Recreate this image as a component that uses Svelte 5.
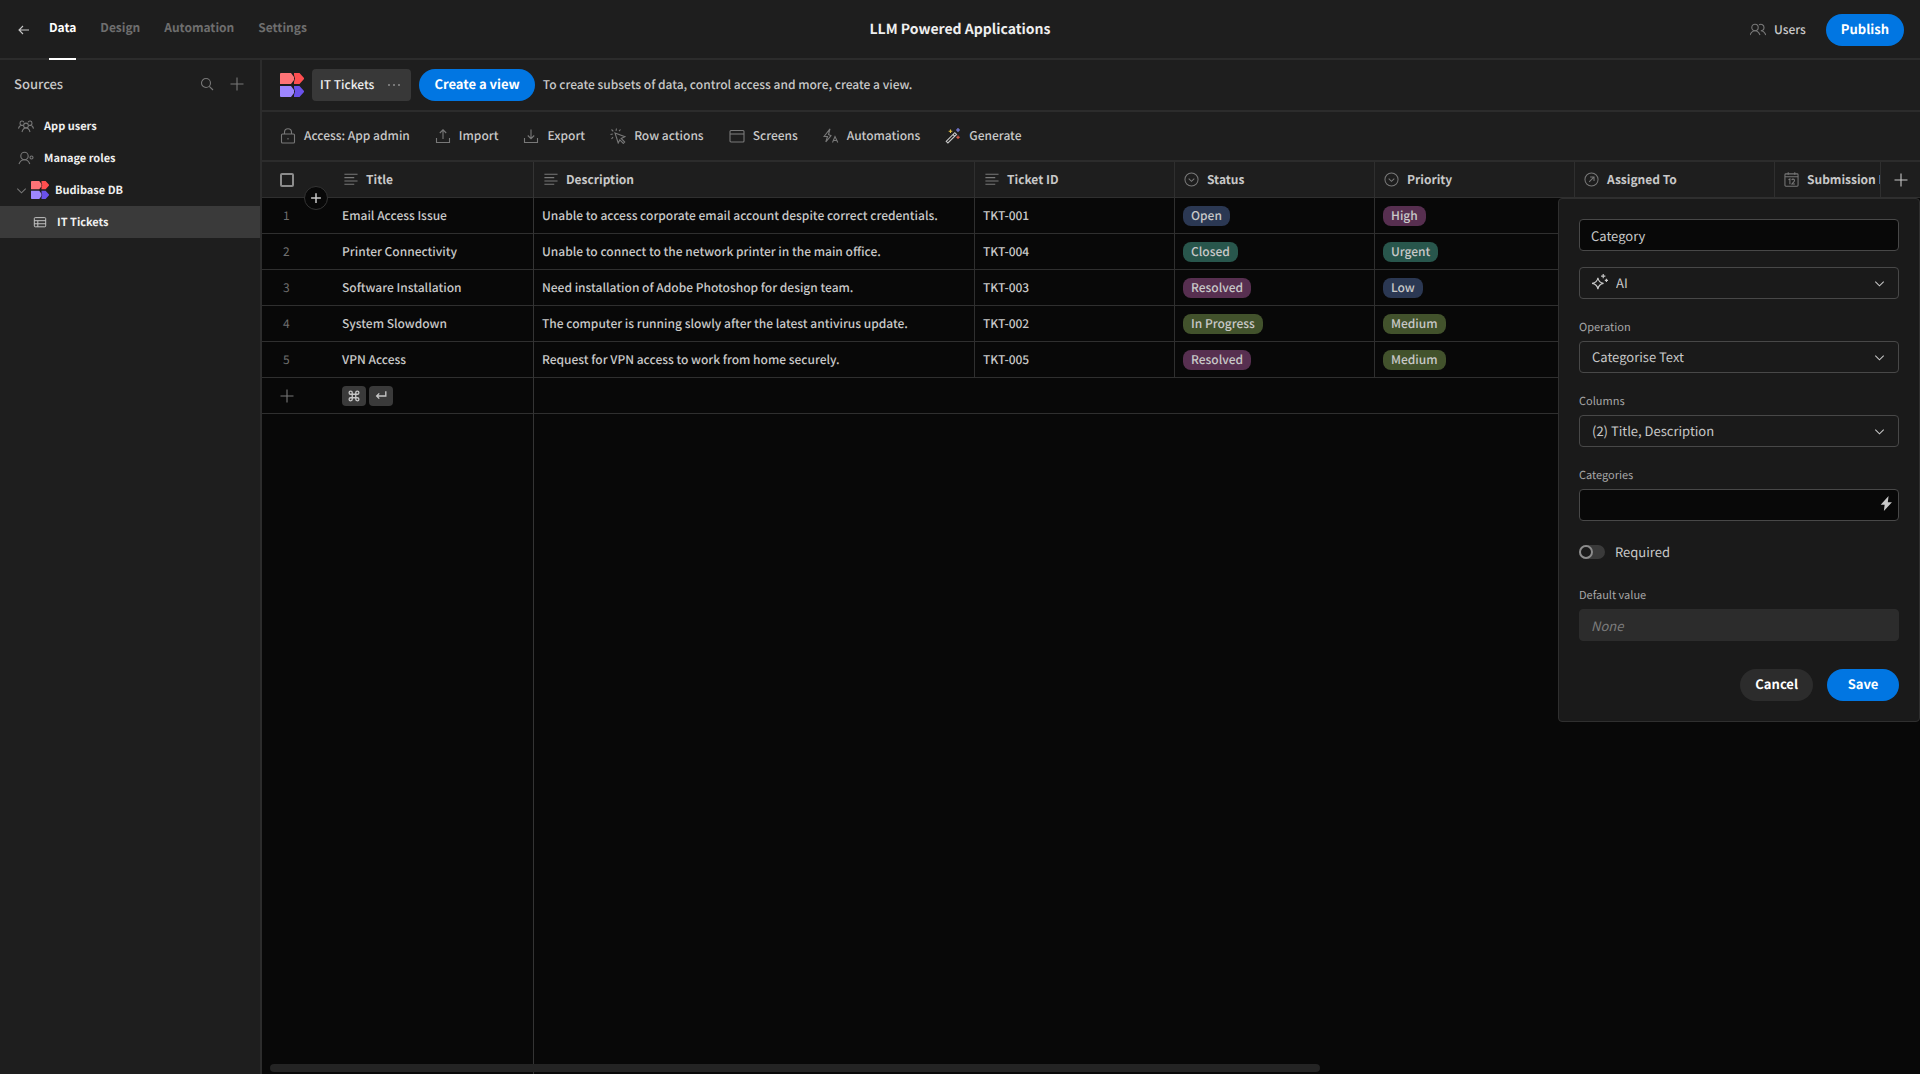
<script lang="ts">
  type Tag = { label: string; tone: string };
  type Ticket = {
    title: string;
    description: string;
    ticketId: string;
    status: Tag;
    priority: Tag;
  };

  const tabs = ['Data', 'Design', 'Automation', 'Settings'];
  let activeTab = $state('Data');

  const actions = [
    { label: 'Access: App admin', icon: 'lock' },
    { label: 'Import', icon: 'import' },
    { label: 'Export', icon: 'export' },
    { label: 'Row actions', icon: 'cursor' },
    { label: 'Screens', icon: 'screen' },
    { label: 'Automations', icon: 'automation' },
    { label: 'Generate', icon: 'wand' },
  ];

  const columns = [
    { label: 'Title', icon: 'text', cls: 'col-title' },
    { label: 'Description', icon: 'text', cls: 'col-wide' },
    { label: 'Ticket ID', icon: 'text', cls: 'col' },
    { label: 'Status', icon: 'options', cls: 'col' },
    { label: 'Priority', icon: 'options', cls: 'col' },
    { label: 'Assigned To', icon: 'link', cls: 'col' },
    { label: 'Submission Date', icon: 'date', cls: 'col' },
  ];

  const rows: Ticket[] = [
    {
      title: 'Email Access Issue',
      description: 'Unable to access corporate email account despite correct credentials.',
      ticketId: 'TKT-001',
      status: { label: 'Open', tone: 'blue' },
      priority: { label: 'High', tone: 'plum' },
    },
    {
      title: 'Printer Connectivity',
      description: 'Unable to connect to the network printer in the main office.',
      ticketId: 'TKT-004',
      status: { label: 'Closed', tone: 'teal' },
      priority: { label: 'Urgent', tone: 'teal' },
    },
    {
      title: 'Software Installation',
      description: 'Need installation of Adobe Photoshop for design team.',
      ticketId: 'TKT-003',
      status: { label: 'Resolved', tone: 'plum' },
      priority: { label: 'Low', tone: 'blue' },
    },
    {
      title: 'System Slowdown',
      description: 'The computer is running slowly after the latest antivirus update.',
      ticketId: 'TKT-002',
      status: { label: 'In Progress', tone: 'olive' },
      priority: { label: 'Medium', tone: 'olive' },
    },
    {
      title: 'VPN Access',
      description: 'Request for VPN access to work from home securely.',
      ticketId: 'TKT-005',
      status: { label: 'Resolved', tone: 'plum' },
      priority: { label: 'Medium', tone: 'olive' },
    },
  ];

  let columnName = $state('Category');
  let categories = $state('');
  let required = $state(false);
</script>

{#snippet logo()}
  <svg class="logo" viewBox="0 0 24 24" aria-hidden="true">
    <path fill="#ff7376" d="M0 1q0-1 1-1h10l3 4v3l-3 4H0z" />
    <path fill="#ff4e50" d="M14 0h5.500l4.500 5v1l-4.500 5H14l0-2 1-3.500-1-3.500z" />
    <path fill="#9d86ff" d="M0 13h11l3 4v3l-3 4H1q-1 0-1-1z" />
    <path fill="#6a51ea" d="M14 13h5.500l4.500 5v1l-4.500 5H14l0-2 1-3.500-1-3.500z" />
  </svg>
{/snippet}

{#snippet icon(name: string)}
  <svg class="icon" viewBox="0 0 16 16" aria-hidden="true">
    {#if name === 'back'}
      <path d="M7 4 3 8l4 4M3 8h10" />
    {:else if name === 'search'}
      <circle cx="7" cy="7" r="4.500" /><path d="m10.300 10.300 3.700 3.700" />
    {:else if name === 'plus'}
      <path d="M8 1.500v13M1.500 8h13" />
    {:else if name === 'users'}
      <circle cx="5" cy="5.500" r="3.200" />
      <path d="M0 13c1-2.500 2.600-4.300 5-4.300S9 10.500 10 13M9 2.800c2.600-1.400 5 .2 5 2.700 0 1.700-1.300 3.200-3.200 3.200 2.400 0 4 1.800 5 4.300" />
    {:else if name === 'group'}
      <circle cx="8" cy="7.500" r="2.400" />
      <path d="M4 14c.6-2.500 2-4 4-4s3.400 1.500 4 4M5 7.200C3.500 7.700 2 7 2 5.200 2 2.600 5.200 2.300 6 4.400M.5 10.500c.5-2 1.500-3 3.200-3.200M11 7.200c1.500.5 3-.2 3-2 0-2.600-3.200-2.900-4-.8M15.500 10.500c-.5-2-1.500-3-3.200-3.200" />
    {:else if name === 'role'}
      <circle cx="6.500" cy="6" r="3.700" />
      <path d="M1 14c.8-2.600 2.800-4.300 5.500-4.300 2.600 0 4.500 1.700 5.300 4.300" />
      <circle cx="13.500" cy="7.500" r="1.500" />
    {:else if name === 'chevron'}
      <path d="m3.500 6 4.500 4.500L12.500 6" />
    {:else if name === 'table'}
      <rect x="1.500" y="3" width="13" height="10.500" rx="1" /><path d="M1.500 6.500h13M1.500 10h13M5.500 6.500v7" />
    {:else if name === 'lock'}
      <rect x="1.500" y="6" width="13" height="9" rx="1" /><path d="M4.500 6V4.200c0-4.600 7-4.600 7 0V6M8 10v1.500" />
    {:else if name === 'import'}
      <path d="M1.500 10v4.500h13V10M8 11V2M4.800 5 8 1.800 11.200 5" />
    {:else if name === 'export'}
      <path d="M1.500 10v4.500h13V10M8 1.500v9M4.800 7.500 8 10.700l3.200-3.200" />
    {:else if name === 'cursor'}
      <path d="m5 5 10 3.700-3.800 1.800 3.500 3.500-1.400 1.400-3.500-3.500L8.200 15zM3.300 3.300 1.500 1.500M6 2.800 6.500.5M2.800 6 .5 6.500M9 3.200l1.500-1.700M3 9.200 1.500 11" />
    {:else if name === 'screen'}
      <rect x="1" y="2.500" width="14" height="11.500" rx="1" /><path d="M1 6h14" />
    {:else if name === 'automation'}
      <path d="M7 .8 1 8.500h3.500L2.800 14 8 7.700 5.500 6.500zM9.500 14.500l2.500-6 2.800 6M10.300 12.500h3.700" />
    {:else if name === 'wand'}
      <path class="wand" d="m1.200 13.300 8.600-8.600 1.700 1.700-8.600 8.600zM8 6.500l1.700 1.700" />
      <path class="spark-y" d="M5.500 1.500v3.500M3.700 3.200h3.600" />
      <path class="spark-b" d="M13 0v4M11 2h4" />
      <path class="spark-r" d="M13 7.500v3.500M11.300 9.300h3.500" />
    {:else if name === 'text'}
      <path d="M1.500 2.500h14M1.500 6h10.500M1.500 9.500h14M1.500 13h10.500" />
    {:else if name === 'options'}
      <circle cx="8" cy="8" r="7" /><path d="m5 7 3 3 3-3" />
    {:else if name === 'link'}
      <circle cx="8" cy="8" r="7" /><path d="m5.500 10.500 5-5M6.500 5.300h4.200v4.200" />
    {:else if name === 'date'}
      <rect x="1" y="2" width="14" height="13.200" rx="1" />
      <path d="M1 5h14M4.500.3v2.700M11.500.3v2.700M4.800 8.200l1.500-.8V13M8.300 8.700c.3-1.600 2.900-1.400 2.900.3 0 1.200-1.300 2-2.800 3.800h3.200" />
    {:else if name === 'ai'}
      <path d="M6.500 3.500c.5 3.300 2 4.800 5.300 5.300-3.300.5-4.800 2-5.300 5.500C6 10.800 4.500 9.300 1 8.800c3.500-.5 5-2 5.500-5.300zM11.500 0v4M9.500 2h4M14.500 4.500v3M13 6h3" />
    {:else if name === 'bolt'}
      <path class="solid" d="M10.200 0 1.800 9.300h4.200L5.200 16l8.600-9.400H9.400z" />
    {:else if name === 'command'}
      <path class="bold" d="M6 6v4h4V6zM6 6H4.200C1.800 6 1.800 2.500 4.200 2.500 5.500 2.500 6 3.200 6 4.200zM10 6h1.800c2.400 0 2.400-3.500 0-3.500-1.300 0-1.800.7-1.800 1.700zM6 10H4.200c-2.400 0-2.400 3.500 0 3.500 1.300 0 1.800-.7 1.800-1.700zM10 10h1.800c2.400 0 2.400 3.500 0 3.500-1.300 0-1.800-.7-1.800-1.700z" />
    {:else if name === 'enter'}
      <path class="bold" d="M13.500 2.500V8H3M6 5 3 8l3 3" />
    {/if}
  </svg>
{/snippet}

{#snippet tag(t: Tag)}
  <span class="tag {t.tone}">{t.label}</span>
{/snippet}

<div class="app">
  <header class="top">
    <nav>
      <button class="bare back" aria-label="Back">{@render icon('back')}</button>
      {#each tabs as tab}
        <button class="tab" class:active={tab === activeTab} onclick={() => (activeTab = tab)}>{tab}</button>
      {/each}
    </nav>
    <h1>LLM Powered Applications</h1>
    <div class="top-right">
      <button class="bare users">{@render icon('users')}Users</button>
      <button class="pill primary">Publish</button>
    </div>
  </header>

  <div class="body">
    <aside>
      <div class="sources">
        <h2>Sources</h2>
        <button class="bare" aria-label="Search sources">{@render icon('search')}</button>
        <button class="bare" aria-label="Add source">{@render icon('plus')}</button>
      </div>
      <a class="nav-item" href="#users">{@render icon('group')}App users</a>
      <a class="nav-item" href="#roles">{@render icon('role')}Manage roles</a>
      <a class="nav-item db" href="#db">{@render icon('chevron')}{@render logo()}Budibase DB</a>
      <a class="nav-item child selected" href="#tickets">{@render icon('table')}IT Tickets</a>
    </aside>

    <main>
      <div class="view-bar">
        {@render logo()}
        <button class="chip">IT Tickets <span class="dots"><i></i><i></i><i></i></span></button>
        <button class="pill primary">Create a view</button>
        <p>To create subsets of data, control access and more, create a view.</p>
      </div>

      <div class="toolbar">
        {#each actions as action}
          <button class="bare">{@render icon(action.icon)}{action.label}</button>
        {/each}
      </div>

      <div class="grid">
        <div class="scroller">
          <table>
            <thead>
              <tr>
                <th class="gutter"><input type="checkbox" aria-label="Select all rows" /></th>
                {#each columns as col}
                  <th class={col.cls}><div class="head">{@render icon(col.icon)}{col.label}</div></th>
                {/each}
              </tr>
            </thead>
            <tbody>
              {#each rows as row, i}
                <tr>
                  <td class="gutter">{i + 1}</td>
                  <td>{row.title}</td>
                  <td>{row.description}</td>
                  <td>{row.ticketId}</td>
                  <td>{@render tag(row.status)}</td>
                  <td>{@render tag(row.priority)}</td>
                  <td></td>
                  <td></td>
                </tr>
              {/each}
              <tr>
                <td class="gutter"><button class="bare" aria-label="Add row">{@render icon('plus')}</button></td>
                <td>
                  <div class="keys">
                    <kbd>{@render icon('command')}</kbd>
                    <kbd>{@render icon('enter')}</kbd>
                  </div>
                </td>
                <td colspan="6"></td>
              </tr>
            </tbody>
          </table>
        </div>

        <button class="insert" aria-label="Insert row">{@render icon('plus')}</button>
        <button class="add-column" aria-label="Add column">{@render icon('plus')}</button>
        <div class="scrollbar"></div>

        <!-- new column popover -->
        <form class="popover" onsubmit={(e) => e.preventDefault()}>
          <input class="box" type="text" aria-label="Column name" bind:value={columnName} />

          <div class="select with-icon">
            <span class="lead">{@render icon('ai')}</span>
            <select class="box" aria-label="Type"><option>AI</option></select>
            {@render icon('chevron')}
          </div>

          <div class="field">
            <label for="operation">Operation</label>
            <div class="select">
              <select class="box" id="operation"><option>Categorise Text</option></select>
              {@render icon('chevron')}
            </div>
          </div>

          <div class="field">
            <label for="columns">Columns</label>
            <div class="select">
              <select class="box" id="columns"><option>(2) Title, Description</option></select>
              {@render icon('chevron')}
            </div>
          </div>

          <div class="field">
            <label for="categories">Categories</label>
            <div class="binding">
              <input class="box" id="categories" type="text" bind:value={categories} />
              <button class="bare" type="button" aria-label="Bindings">{@render icon('bolt')}</button>
            </div>
          </div>

          <label class="toggle">
            <input type="checkbox" bind:checked={required} />
            Required
          </label>

          <div class="field">
            <label for="default">Default value</label>
            <input class="box" id="default" type="text" placeholder="None" disabled />
          </div>

          <div class="buttons">
            <button class="pill secondary" type="button">Cancel</button>
            <button class="pill primary wide" type="submit">Save</button>
          </div>
        </form>
      </div>
    </main>
  </div>
</div>

<style>
  :global(body) { background: #080808; }

  .app {
    --line: #2c2c2c;
    --panel: #1e1e1e;
    --text: #c8c8c8;
    --muted: #787878;
    display: flex;
    flex-direction: column;
    height: 100vh;
    overflow: hidden;
    font-family: "Noto Sans CJK SC", "Open Sans", sans-serif;
    font-size: 12px;
    font-weight: 500;
    line-height: 20px;
    text-rendering: geometricPrecision;
    color: var(--text);
  }

  .app *, .app *::before, .app *::after { box-sizing: border-box; }

  button, input, select { font: inherit; color: inherit; text-rendering: inherit; }
  button { cursor: pointer; }

  .icon {
    flex: none;
    width: 16px;
    height: 16px;
    fill: none;
    stroke: var(--muted);
    stroke-width: 1.1;
  }

  .icon .solid { fill: var(--text); stroke: none; }
  .icon .bold { stroke: var(--text); stroke-width: 1.5; }
  .icon .wand { stroke: var(--text); }
  .icon .spark-y { stroke: #e8c341; }
  .icon .spark-b { stroke: #8488f0; }
  .icon .spark-r { stroke: #e5604d; }

  .logo { flex: none; width: 24px; height: 24px; }

  .bare {
    display: flex;
    align-items: center;
    gap: 8px;
    padding: 0;
    border: none;
    background: none;
  }

  .pill {
    height: 32px;
    padding: 0 15px 2px;
    border: none;
    border-radius: 16px;
    font-size: 13px;
    font-weight: 700;
    color: #fff;
  }

  .primary { background: #0176e2; }
  .secondary { background: #2c2c2c; }
  .wide { min-width: 72px; }

  /* top bar */
  .top {
    display: grid;
    grid-template-columns: 1fr auto 1fr;
    align-items: center;
    flex: none;
    height: 60px;
    padding: 0 16px;
    background: var(--panel);
    border-bottom: 2px solid var(--line);
  }

  nav { display: flex; align-items: center; gap: 24px; }
  .back { margin-right: -7px; }
  .back .icon { stroke: var(--text); }

  .tab {
    height: 60px;
    padding: 0 0 2px;
    border: none;
    border-bottom: 2px solid transparent;
    background: none;
    font-weight: 700;
    color: #6e6e6e;
  }

  .tab.active { color: #fff; border-color: #fff; }

  h1 {
    margin: 0;
    padding-bottom: 2px;
    font-size: 14px;
    font-weight: 700;
    color: #efefef;
  }

  .top-right { display: flex; justify-content: flex-end; align-items: center; gap: 20px; }

  .body { display: flex; flex: 1; min-height: 0; }

  /* sidebar */
  aside {
    flex: none;
    width: 262px;
    background: var(--panel);
    border-right: 2px solid var(--line);
  }

  .sources {
    display: flex;
    align-items: center;
    gap: 14px;
    height: 50px;
    padding: 0 15px 2px 14px;
  }

  h2 { flex: 1; margin: 0; font-size: 13px; font-weight: 500; }

  .nav-item {
    display: flex;
    align-items: center;
    gap: 10px;
    height: 32px;
    padding-left: 18px;
    font-size: 11px;
    font-weight: 700;
    color: #efefef;
    text-decoration: none;
  }

  .nav-item .logo { width: 18px; height: 18px; }
  .nav-item.db { gap: 6px; padding-left: 14px; }
  .nav-item.db .icon { width: 15px; height: 15px; margin-right: -4px; }
  .nav-item.child { gap: 9px; padding-left: 32px; }
  .selected { background: #3a3a3a; }
  .selected .icon { stroke: var(--text); width: 16px; height: 14px; }

  /* main area */
  main {
    display: flex;
    flex-direction: column;
    flex: 1;
    min-width: 0;
  }

  .view-bar {
    display: flex;
    align-items: center;
    gap: 8px;
    flex: none;
    height: 52px;
    padding: 0 18px;
    background: var(--panel);
    border-bottom: 2px solid var(--line);
  }

  .view-bar p { margin: 0; }

  .chip {
    display: flex;
    align-items: center;
    gap: 14px;
    height: 32px;
    padding: 0 11px 0 8px;
    border: none;
    border-radius: 4px;
    background: #383838;
    color: #efefef;
  }

  .dots { display: flex; gap: 3px; }
  .dots i { width: 2px; height: 2px; border-radius: 1px; background: #8c8c8c; }

  .toolbar {
    display: flex;
    align-items: center;
    gap: 25px;
    flex: none;
    height: 50px;
    padding: 0 18px;
    background: var(--panel);
    border-bottom: 2px solid var(--line);
  }

  /* data grid */
  .grid { position: relative; flex: 1; min-height: 0; background: #080808; }
  .scroller { height: 100%; overflow: hidden; }

  /* edge of the frozen column runs the full height */
  .scroller::after {
    content: "";
    position: absolute;
    top: 0;
    bottom: 0;
    left: 271px;
    width: 1px;
    background: #343434;
  }

  table {
    table-layout: fixed;
    width: 1713px;
    border-collapse: separate;
    border-spacing: 0;
  }

  th, td {
    height: 36px;
    padding: 0 8px;
    border-bottom: 1px solid #2f2f2f;
    border-right: 1px solid #2f2f2f;
    text-align: left;
    white-space: nowrap;
  }

  th { background: var(--panel); font-weight: 700; }
  .gutter { width: 72px; padding: 0 18px; border-right: none; font-weight: 400; color: #6e6e6e; }
  td.gutter { padding-left: 21px; }
  td.gutter:has(button) { padding-left: 17px; }
  .col-title { width: 200px; }
  .col-wide { width: 441px; }
  .col { width: 200px; }

  .head { display: flex; align-items: center; gap: 8px; }
  th .icon { margin-left: 1px; width: 15px; height: 15px; }

  th input {
    display: block;
    appearance: none;
    width: 14px;
    height: 14px;
    margin: 0;
    border: 2px solid #8c8c8c;
    border-radius: 2px;
  }

  .tag {
    display: inline-block;
    padding: 0 8px;
    border-radius: 8px;
    vertical-align: middle;
  }

  .blue { background: #2b3853; }
  .plum { background: #572f50; }
  .teal { background: #28564c; }
  .olive { background: #42522c; }

  .keys { display: flex; gap: 3px; }

  kbd {
    display: flex;
    align-items: center;
    justify-content: center;
    width: 24px;
    height: 20px;
    border-radius: 4px;
    background: #3a3a3a;
  }

  kbd .icon { width: 14px; height: 14px; }

  .insert {
    position: absolute;
    top: 24px;
    left: 42px;
    display: flex;
    align-items: center;
    justify-content: center;
    width: 24px;
    height: 24px;
    padding: 0;
    border: 1px solid #343434;
    border-radius: 12px;
    background: #080808;
  }

  .insert .icon { width: 12px; height: 12px; stroke: var(--text); stroke-width: 2; }

  .add-column {
    position: absolute;
    top: 0;
    right: 0;
    display: flex;
    align-items: center;
    justify-content: center;
    width: 40px;
    height: 36px;
    padding: 0;
    border: solid #2f2f2f;
    border-width: 0 0 1px 1px;
    background: var(--panel);
  }

  .add-column .icon { stroke: var(--text); }

  .scrollbar {
    position: absolute;
    left: 8px;
    bottom: 2px;
    width: 1050px;
    max-width: 80%;
    height: 8px;
    border-radius: 4px;
    background: #242424;
  }

  /* popover */
  .popover {
    position: absolute;
    top: 36px;
    right: 0;
    display: flex;
    flex-direction: column;
    gap: 16px;
    width: 362px;
    padding: 20px;
    border: 1px solid #2f2f2f;
    border-radius: 4px;
    background: #1a1a1a;
    font-size: 13px;
    font-weight: 400;
  }

  .box {
    display: block;
    width: 100%;
    height: 32px;
    padding: 0 11px;
    border: 1px solid #484848;
    border-radius: 4px;
    background: #080808;
    appearance: none;
    outline: none;
  }

  .box:disabled { border-color: #2c2c2c; background: #2c2c2c; }
  .box::placeholder { color: #7c7c7c; font-style: italic; opacity: 1; }

  .select, .binding { position: relative; }
  .select .box { padding: 0 12px; background: transparent; }
  .with-icon .box { padding-left: 36px; }

  .select > .icon {
    position: absolute;
    top: 9px;
    right: 12px;
    width: 15px;
    height: 15px;
    stroke: var(--text);
    pointer-events: none;
  }

  .lead { position: absolute; top: 7px; left: 12px; display: flex; }
  .lead .icon { stroke: var(--text); width: 17px; height: 17px; }
  .binding .bare { position: absolute; top: 7px; right: 5px; }
  .binding .icon { width: 15px; height: 15px; }

  .field label {
    display: block;
    height: 26px;
    line-height: 24px;
    font-size: 11px;
    color: #a8a8a8;
  }

  .toggle { display: flex; align-items: center; gap: 10px; height: 30px; }

  .toggle input {
    appearance: none;
    display: flex;
    width: 26px;
    height: 14px;
    margin: 0;
    border-radius: 7px;
    background: #3a3a3a;
  }

  .toggle input::before {
    content: "";
    width: 14px;
    height: 14px;
    border: 2px solid #8c8c8c;
    border-radius: 7px;
    background: #1a1a1a;
  }

  .toggle input:checked { justify-content: flex-end; }

  .buttons { display: flex; justify-content: flex-end; gap: 14px; padding-top: 12px; }
</style>
